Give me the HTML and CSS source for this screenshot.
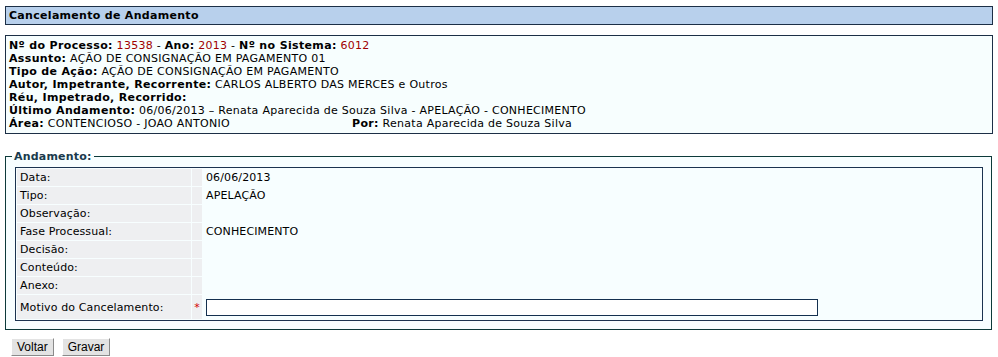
FILE: index.html
```html
<!DOCTYPE html>
<html lang="pt">
<head>
<meta charset="utf-8">
<title>Cancelamento de Andamento</title>
<link rel="stylesheet" href="styles.css">
</head>
<body>
<div class="title">Cancelamento de Andamento</div>

<div class="info">
  <div><b>Nº do Processo:</b> <span class="red">13538</span> - <b>Ano:</b> <span class="red">2013</span> - <b>Nº no Sistema:</b> <span class="red">6012</span></div>
  <div><b>Assunto:</b> AÇÃO DE CONSIGNAÇÃO EM PAGAMENTO 01</div>
  <div><b>Tipo de Ação:</b> AÇÃO DE CONSIGNAÇÃO EM PAGAMENTO</div>
  <div><b>Autor, Impetrante, Recorrente:</b> CARLOS ALBERTO DAS MERCES e Outros</div>
  <div><b>Réu, Impetrado, Recorrido:</b></div>
  <div><b>Último Andamento:</b> 06/06/2013 – Renata Aparecida de Souza Silva - APELAÇÃO - CONHECIMENTO</div>
  <div class="split"><span class="area"><b>Área:</b> CONTENCIOSO - JOAO ANTONIO</span><span><b>Por:</b> Renata Aparecida de Souza Silva</span></div>
</div>

<fieldset class="andamento">
  <legend>Andamento:</legend>
  <table class="grid">
    <tr><td class="lbl">Data:</td><td class="sp"></td><td class="val">06/06/2013</td></tr>
    <tr><td class="lbl">Tipo:</td><td class="sp"></td><td class="val">APELAÇÃO</td></tr>
    <tr><td class="lbl">Observação:</td><td class="sp"></td><td class="val"></td></tr>
    <tr><td class="lbl">Fase Processual:</td><td class="sp"></td><td class="val">CONHECIMENTO</td></tr>
    <tr><td class="lbl">Decisão:</td><td class="sp"></td><td class="val"></td></tr>
    <tr><td class="lbl">Conteúdo:</td><td class="sp"></td><td class="val"></td></tr>
    <tr><td class="lbl">Anexo:</td><td class="sp"></td><td class="val"></td></tr>
    <tr class="tall"><td class="lbl">Motivo do Cancelamento:</td><td class="sp"><span class="req">*</span></td><td class="val"><input class="motivo" type="text"></td></tr>
  </table>
</fieldset>

<div class="buttons">
  <button class="btn" type="button">Voltar</button>
  <button class="btn" type="button">Gravar</button>
</div>
</body>
</html>
```

FILE: styles.css
```css
html, body {
  background: #ffffff;
}
body {
  margin: 0;
  padding: 6px 5px 0 5px;
  font-family: "DejaVu Sans", Verdana, sans-serif;
  font-size: 11px;
  color: #000000;
}
.title {
  border: 1px solid #1c2f46;
  background: #b8d0ec;
  height: 17px;
  line-height: 17px;
  padding-left: 3px;
  font-weight: bold;
  letter-spacing: 0.3px;
}
.info {
  margin-top: 10px;
  border: 1px solid #1c2f46;
  background: #f7fefe;
  padding: 3px;
  line-height: 13px;
  letter-spacing: 0.27px;
}
.info b {
  letter-spacing: 0.35px;
}
.red {
  color: #a00000;
}
.split {
  display: flex;
}
.area {
  width: 343px;
}
.andamento {
  margin: 16px 1px 0 0;
  border: 1px solid #0d3a3a;
  background: #f7feff;
  padding: 4px 8px 8px 9px;
  min-width: 0;
}
.andamento legend {
  font-weight: bold;
  color: #1b3a4c;
  padding: 0 2px;
  margin-left: -3px;
  line-height: 13px;
  letter-spacing: 0.2px;
}
.grid {
  width: 100%;
  border: 1px solid #1b3350;
  border-spacing: 1px;
  background: #f7feff;
  letter-spacing: 0.12px;
}
.grid td {
  height: 17px;
  padding: 0;
  line-height: 13px;
}
.grid .lbl {
  width: 171px;
  background: #eeeff1;
  padding-left: 3px;
}
.grid .sp {
  width: 10px;
  background: #eeeff1;
  text-align: center;
}
.grid .val {
  padding-left: 3px;
}
.grid .tall td {
  height: 24px;
}
.req {
  color: #d40000;
}
.motivo {
  display: block;
  width: 612px;
  height: 17px;
  box-sizing: border-box;
  margin: 0;
  border: 1px solid #14304f;
  background: #ffffff;
  padding: 0 2px;
  font: 11px "DejaVu Sans", sans-serif;
}
.buttons {
  display: flex;
  gap: 8px;
  margin: 8px 0 0 6px;
}
.btn {
  font-family: "Liberation Sans", Tahoma, sans-serif;
  font-size: 12px;
  height: 18px;
  padding: 0 5px;
  background: #e3e3e3;
  border: 1px solid;
  border-color: #ffffff #8a8a8a #8a8a8a #ffffff;
  color: #000000;
  line-height: 14px;
}
```
